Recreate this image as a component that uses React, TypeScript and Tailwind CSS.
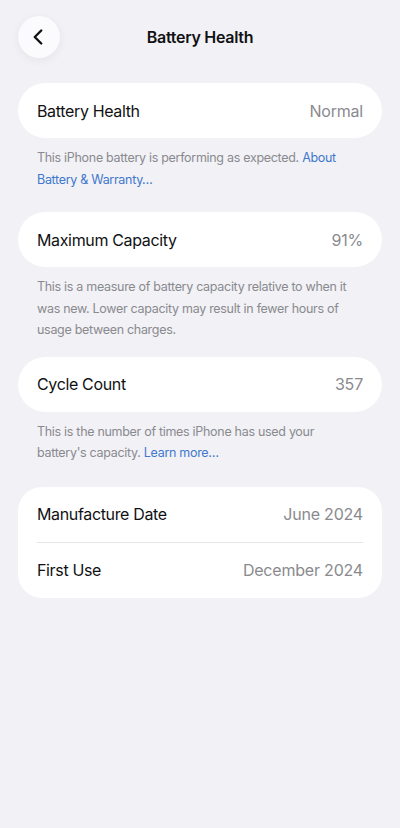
import { ChevronLeft } from 'lucide-react';

const font = { fontFamily: 'Inter, "Noto Sans", sans-serif' };

function Row({ label, value }: { label: string; value: string }) {
  return (
    <div className="flex items-center justify-between h-[55px]">
      <span className="text-[16px] text-[#111113] tracking-[-0.35px]">{label}</span>
      <span className="text-[16px] text-[#8a8a8e] tracking-[-0.2px]">{value}</span>
    </div>
  );
}

function Footnote({ children }: { children: React.ReactNode }) {
  return (
    <p className="px-[19px] pt-[9px] text-[12.5px] leading-[21.5px] text-[#8a8a8e] tracking-[-0.3px]">
      {children}
    </p>
  );
}

export default function App() {
  return (
    <div className="min-h-[828px] w-full bg-[#f1f1f6]" style={font}>
      {/* header */}
      <div className="relative flex items-center justify-center h-[74px] px-[18px]">
        <button className="absolute left-[18px] top-[16px] w-[42px] h-[42px] rounded-full bg-[#fbfbfd] shadow-[0_2px_10px_rgba(0,0,0,0.06)] flex items-center justify-center">
          <ChevronLeft size={26} strokeWidth={2.2} className="text-[#111113] -ml-[2px]" />
        </button>
        <h1 className="text-[16px] font-semibold text-[#111113] tracking-[-0.3px]">Battery Health</h1>
      </div>

      <div className="px-[18px] pt-[9px]">
        <div className="bg-white rounded-[28px] px-[19px]">
          <Row label="Battery Health" value="Normal" />
        </div>
        <Footnote>
          This iPhone battery is performing as expected.{' '}
          <span className="text-[#3f78cc]">About Battery &amp; Warranty…</span>
        </Footnote>

        <div className="bg-white rounded-[28px] px-[19px] mt-[22px]">
          <Row label="Maximum Capacity" value="91%" />
        </div>
        <Footnote>
          This is a measure of battery capacity relative to when it was new. Lower capacity may result in fewer hours of usage between charges.
        </Footnote>

        <div className="bg-white rounded-[28px] px-[19px] mt-[16px]">
          <Row label="Cycle Count" value="357" />
        </div>
        <Footnote>
          This is the number of times iPhone has used your battery's capacity.{' '}
          <span className="text-[#3f78cc]">Learn more…</span>
        </Footnote>

        <div className="bg-white rounded-[24px] px-[19px] mt-[23px]">
          <Row label="Manufacture Date" value="June 2024" />
          <div className="h-px bg-[#e6e6ea]" />
          <Row label="First Use" value="December 2024" />
        </div>
      </div>
    </div>
  );
}
